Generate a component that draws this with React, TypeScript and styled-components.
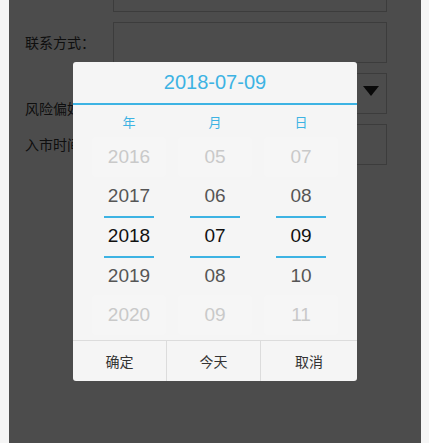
import React from "react";
import styled, { createGlobalStyle } from "styled-components";

const GlobalStyle = createGlobalStyle`
  html, body {
    margin: 0;
    padding: 0;
    background: #f5f5f5;
    font-family: "Liberation Sans", "Noto Sans CJK SC", sans-serif;
    overflow: hidden;
  }
`;

const Page = styled.div`
  position: relative;
  margin: 0 8px 0 9px;
  min-height: 100vh;
  background: #ffffff;
  overflow: hidden;
`;

const Form = styled.div`
  display: flex;
  flex-direction: column;
  gap: 10px;
  margin-top: -29px;
  padding: 0 34px 0 16px;
`;

const Row = styled.div`
  display: flex;
  align-items: stretch;
`;

const Label = styled.div<{ $bottom?: boolean }>`
  width: 88px;
  flex: none;
  display: flex;
  align-items: ${(p) => (p.$bottom ? "flex-end" : "center")};
  margin-bottom: ${(p) => (p.$bottom ? "-3px" : "0")};
  font-size: 14px;
  color: #333;
  white-space: nowrap;
  line-height: 16px;
`;

const Field = styled.div`
  position: relative;
  flex: 1;
  height: 39px;
  border: 1px solid #c8c8c8;
  background: #fdfdfd;
`;

const Caret = styled.span`
  position: absolute;
  right: 7px;
  top: 12px;
  width: 0;
  height: 0;
  border-left: 8px solid transparent;
  border-right: 8px solid transparent;
  border-top: 10px solid #222;
`;

const Overlay = styled.div`
  position: absolute;
  inset: 0;
  background: rgba(0, 0, 0, 0.7);
  display: flex;
  align-items: center;
  justify-content: center;
`;

const Dialog = styled.div`
  width: 284px;
  background: #f5f5f5;
  border-radius: 3px;
  overflow: hidden;
  display: flex;
  flex-direction: column;
`;

const Title = styled.div`
  height: 41px;
  display: flex;
  align-items: center;
  justify-content: center;
  font-size: 20px;
  color: #3db3e3;
  border-bottom: 2px solid #3db3e3;
`;

const Columns = styled.div`
  display: grid;
  grid-template-columns: repeat(3, 86px);
  padding: 0 13px 5px;
`;

const Column = styled.div`
  display: flex;
  flex-direction: column;
  align-items: center;
`;

const ColHead = styled.div`
  height: 32px;
  display: flex;
  align-items: center;
  justify-content: center;
  font-size: 13px;
  color: #3db3e3;
`;

const Item = styled.div<{ $level: 0 | 1 | 2 }>`
  position: relative;
  align-self: stretch;
  margin: 0 6px;
  height: 39.6px;
  display: flex;
  align-items: center;
  justify-content: center;
  font-size: 19px;
  border-radius: 4px;
  color: ${(p) => (p.$level === 0 ? "#111" : p.$level === 1 ? "#555" : "#c9c9c9")};
  background: ${(p) => (p.$level === 2 ? "rgba(255,255,255,0.18)" : "transparent")};
`;

const Mark = styled.span`
  position: absolute;
  left: 50%;
  bottom: -2px;
  width: 50px;
  margin-left: -25px;
  height: 2px;
  background: #3db3e3;
`;

const Footer = styled.div`
  display: grid;
  grid-template-columns: 93px 94px 1fr;
  border-top: 1px solid #dcdcdc;
`;

const Button = styled.div`
  height: 40px;
  display: flex;
  align-items: center;
  justify-content: center;
  font-size: 14px;
  color: #333;
  & + & {
    border-left: 1px solid #dcdcdc;
  }
`;

const columns = [
  { head: "年", items: ["2016", "2017", "2018", "2019", "2020"] },
  { head: "月", items: ["05", "06", "07", "08", "09"] },
  { head: "日", items: ["07", "08", "09", "10", "11"] },
];

const levels: (0 | 1 | 2)[] = [2, 1, 0, 1, 2];

export default function App() {
  return (
    <>
      <GlobalStyle />
      <Page>
        <Form>
          <Row>
            <Label />
            <Field />
          </Row>
          <Row>
            <Label>联系方式：</Label>
            <Field />
          </Row>
          <Row>
            <Label $bottom>风险偏好：</Label>
            <Field>
              <Caret />
            </Field>
          </Row>
          <Row>
            <Label>入市时间：</Label>
            <Field />
          </Row>
        </Form>
        <Overlay>
          <Dialog>
            <Title>2018-07-09</Title>
            <Columns>
              {columns.map((col) => (
                <Column key={col.head}>
                  <ColHead>{col.head}</ColHead>
                  {col.items.map((it, i) => (
                    <Item key={it} $level={levels[i]}>
                      {it}
                      {(i === 1 || i === 2) && <Mark />}
                    </Item>
                  ))}
                </Column>
              ))}
            </Columns>
            <Footer>
              <Button>确定</Button>
              <Button>今天</Button>
              <Button>取消</Button>
            </Footer>
          </Dialog>
        </Overlay>
      </Page>
    </>
  );
}
